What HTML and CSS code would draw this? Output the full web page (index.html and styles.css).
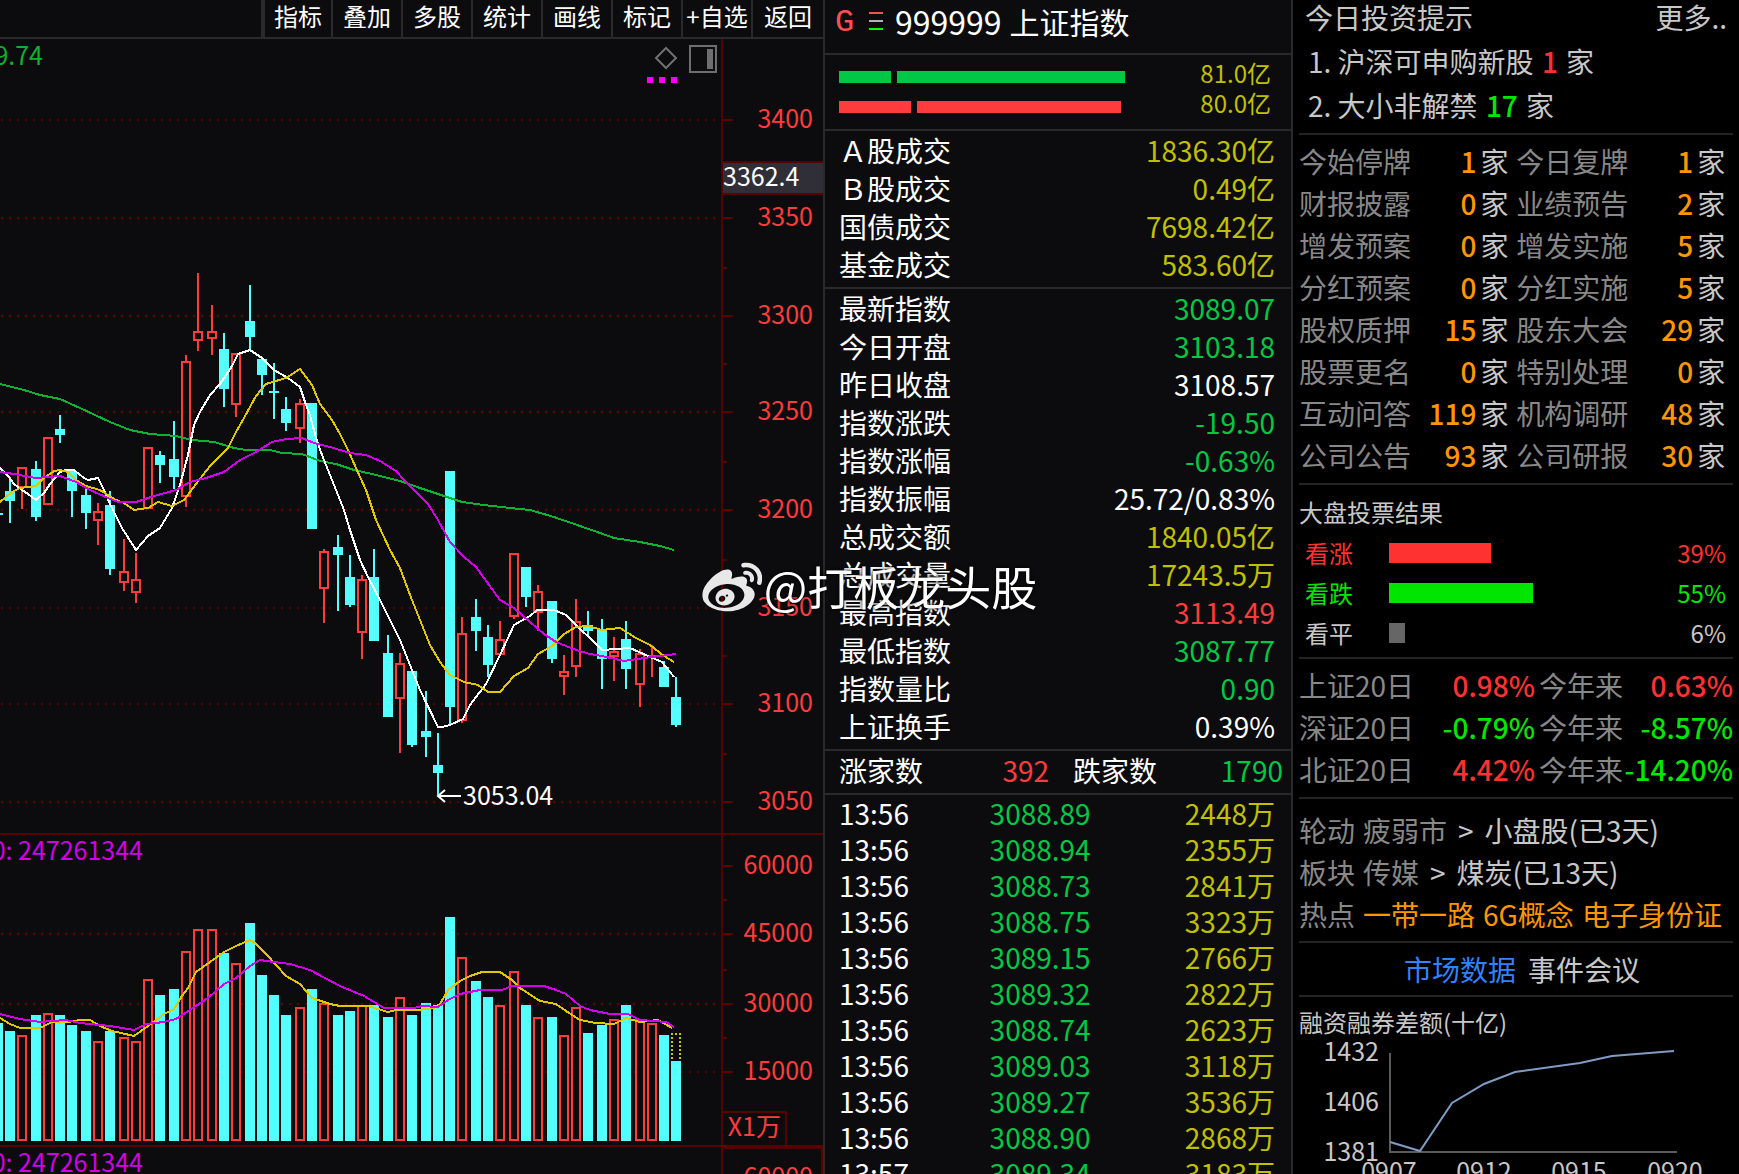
FILE: index.html
```html
<!DOCTYPE html>
<html lang="zh-CN">
<head>
  <meta charset="UTF-8" />
  <meta name="viewport" content="width=device-width, initial-scale=1.0"/>
  <title>999999 上证指数</title>
  <link rel="stylesheet" href="styles.css">
</head>
<body>
  <div class="layout">
    <main class="chart-panel">
      <div class="toolbar">
        <button>指标</button>
        <button>叠加</button>
        <button>多股</button>
        <button>统计</button>
        <button>画线</button>
        <button>标记</button>
        <button>+自选</button>
        <button>返回</button>
      </div>
      <svg id="kline" class="kline" viewBox="0 39 823 1135"></svg>
    </main>

    <section class="quote-panel">
      <h1 class="quote-head">
        <span class="flag">G</span>
        <svg class="menu-icon" width="14" height="18" viewBox="0 0 14 18">
          <rect y="0" width="14" height="2" fill="#ff5050"/>
          <rect y="8" width="14" height="2" fill="#b4b4b4"/>
          <rect y="16" width="14" height="2" fill="#00ff00"/>
        </svg>
        <span class="code">999999</span>
        <span>上证指数</span>
      </h1>

      <div class="block flow">
        <div class="flow-row down-bar"><i style="width:52px"></i><i style="width:228px"></i><span>81.0亿</span></div>
        <div class="flow-row up-bar"><i style="width:72px"></i><i style="width:204px"></i><span>80.0亿</span></div>
      </div>

      <table class="block quotes">
        <tr><th>Ａ股成交</th><td class="amount">1836.30亿</td></tr>
        <tr><th>Ｂ股成交</th><td class="amount">0.49亿</td></tr>
        <tr><th>国债成交</th><td class="amount">7698.42亿</td></tr>
        <tr><th>基金成交</th><td class="amount">583.60亿</td></tr>
      </table>

      <table class="block quotes">
        <tr><th>最新指数</th><td class="down">3089.07</td></tr>
        <tr><th>今日开盘</th><td class="down">3103.18</td></tr>
        <tr><th>昨日收盘</th><td>3108.57</td></tr>
        <tr><th>指数涨跌</th><td class="down">-19.50</td></tr>
        <tr><th>指数涨幅</th><td class="down">-0.63%</td></tr>
        <tr><th>指数振幅</th><td>25.72/0.83%</td></tr>
        <tr><th>总成交额</th><td class="amount">1840.05亿</td></tr>
        <tr><th>总成交量</th><td class="amount">17243.5万</td></tr>
        <tr><th>最高指数</th><td class="up">3113.49</td></tr>
        <tr><th>最低指数</th><td class="down">3087.77</td></tr>
        <tr><th>指数量比</th><td class="down">0.90</td></tr>
        <tr><th>上证换手</th><td>0.39%</td></tr>
      </table>

      <div class="block breadth">
        <span>涨家数</span><span class="up">392</span>
        <span>跌家数</span><span class="down">1790</span>
      </div>

      <table class="ticks">
        <tr><td>13:56</td><td class="down">3088.89</td><td class="amount">2448万</td></tr>
        <tr><td>13:56</td><td class="down">3088.94</td><td class="amount">2355万</td></tr>
        <tr><td>13:56</td><td class="down">3088.73</td><td class="amount">2841万</td></tr>
        <tr><td>13:56</td><td class="down">3088.75</td><td class="amount">3323万</td></tr>
        <tr><td>13:56</td><td class="down">3089.15</td><td class="amount">2766万</td></tr>
        <tr><td>13:56</td><td class="down">3089.32</td><td class="amount">2822万</td></tr>
        <tr><td>13:56</td><td class="down">3088.74</td><td class="amount">2623万</td></tr>
        <tr><td>13:56</td><td class="down">3089.03</td><td class="amount">3118万</td></tr>
        <tr><td>13:56</td><td class="down">3089.27</td><td class="amount">3536万</td></tr>
        <tr><td>13:56</td><td class="down">3088.90</td><td class="amount">2868万</td></tr>
        <tr><td>13:57</td><td class="down">3089.34</td><td class="amount">3183万</td></tr>
      </table>
    </section>

    <aside class="info-panel">
      <div class="card tips">
        <div class="tips-head"><span>今日投资提示</span><a href="#">更多..</a></div>
        <p>1. 沪深可申购新股 <b class="hot">1</b> 家</p>
        <p>2. 大小非解禁 <b class="cool">17</b> 家</p>
      </div>

      <div class="card">
        <table class="events">
          <tr><th>今始停牌</th><td>1</td><td>家</td><th>今日复牌</th><td>1</td><td>家</td></tr>
          <tr><th>财报披露</th><td>0</td><td>家</td><th>业绩预告</th><td>2</td><td>家</td></tr>
          <tr><th>增发预案</th><td>0</td><td>家</td><th>增发实施</th><td>5</td><td>家</td></tr>
          <tr><th>分红预案</th><td>0</td><td>家</td><th>分红实施</th><td>5</td><td>家</td></tr>
          <tr><th>股权质押</th><td>15</td><td>家</td><th>股东大会</th><td>29</td><td>家</td></tr>
          <tr><th>股票更名</th><td>0</td><td>家</td><th>特别处理</th><td>0</td><td>家</td></tr>
          <tr><th>互动问答</th><td>119</td><td>家</td><th>机构调研</th><td>48</td><td>家</td></tr>
          <tr><th>公司公告</th><td>93</td><td>家</td><th>公司研报</th><td>30</td><td>家</td></tr>
        </table>
      </div>

      <div class="card vote">
        <h2>大盘投票结果</h2>
        <div class="vote-row hot"><span>看涨</span><div class="track"><i style="width:39%"></i></div><span>39%</span></div>
        <div class="vote-row cool"><span>看跌</span><div class="track"><i style="width:55%"></i></div><span>55%</span></div>
        <div class="vote-row flat"><span>看平</span><div class="track"><i style="width:6%"></i></div><span>6%</span></div>
      </div>

      <div class="card">
        <table class="returns">
          <tr><th>上证20日</th><td class="hot">0.98%</td><th>今年来</th><td class="hot">0.63%</td></tr>
          <tr><th>深证20日</th><td class="cool">-0.79%</td><th>今年来</th><td class="cool">-8.57%</td></tr>
          <tr><th>北证20日</th><td class="hot">4.42%</td><th>今年来</th><td class="cool">-14.20%</td></tr>
        </table>
      </div>

      <div class="card themes">
        <div class="theme"><em>轮动</em><em>疲弱市</em><span class="arrow">&gt;</span><span>小盘股(已3天)</span></div>
        <div class="theme"><em>板块</em><em>传媒</em><span class="arrow">&gt;</span><span>煤炭(已13天)</span></div>
        <div class="theme"><em>热点</em><a href="#">一带一路</a><a href="#">6G概念</a><a href="#">电子身份证</a></div>
      </div>

      <div class="card tabs">
        <button class="active">市场数据</button>
        <button>事件会议</button>
      </div>

      <div class="margin-data">
        <h2>融资融券差额(十亿)</h2>
        <svg class="margin-chart" viewBox="0 0 434 142">
          <path d="M91 8V107H378" fill="none" stroke="#5a5a5a" stroke-width="2"/>
          <polyline points="91,97 121,106 153,58 185,39 216,27 281,18 313,11 375,6" fill="none" stroke="#7f9cc4" stroke-width="2"/>
          <g text-anchor="end">
            <text x="80" y="16">1432</text>
            <text x="80" y="66">1406</text>
            <text x="80" y="116">1381</text>
          </g>
          <g text-anchor="middle">
            <text x="90" y="136">0907</text>
            <text x="185" y="136">0912</text>
            <text x="280" y="136">0915</text>
            <text x="376" y="136">0920</text>
          </g>
        </svg>
      </div>
    </aside>
  </div>

  <div class="watermark">
    <svg width="60" height="50" viewBox="0 2 24 20" fill="#e8e8e8">
      <path d="M10.098 20.323c-3.977.391-7.414-1.406-7.672-4.02-.259-2.609 2.759-5.047 6.74-5.441 3.979-.394 7.413 1.404 7.671 4.018.259 2.6-2.759 5.049-6.737 5.439l-.002.004zM9.05 17.219c-.384.616-1.208.884-1.829.602-.612-.279-.793-.991-.406-1.593.379-.595 1.176-.861 1.793-.601.622.263.82.972.442 1.592zm1.27-1.627c-.141.237-.449.353-.689.253-.236-.09-.313-.361-.177-.586.138-.227.436-.346.672-.24.239.09.315.36.18.601l.014-.028zm.176-2.719c-1.893-.493-4.033.45-4.857 2.118-.836 1.704-.026 3.591 1.886 4.21 1.983.64 4.318-.341 5.132-2.179.8-1.793-.201-3.642-2.161-4.149zm7.563-1.224c-.346-.105-.57-.18-.405-.615.375-.977.42-1.804 0-2.404-.781-1.112-2.915-1.053-5.364-.03 0 0-.766.331-.571-.271.376-1.217.315-2.224-.27-2.809-1.338-1.337-4.869.045-7.888 3.08C1.309 10.87 0 13.273 0 15.348c0 3.981 5.099 6.395 10.086 6.395 6.536 0 10.888-3.801 10.888-6.82 0-1.822-1.547-2.854-2.915-3.284v.01zm1.908-5.092c-.766-.856-1.908-1.187-2.96-.962-.436.09-.706.511-.616.932.09.42.511.691.932.602.511-.105 1.067.044 1.442.465.376.421.466.977.316 1.473-.136.406.089.856.51.992.405.119.857-.105.992-.512.33-1.021.12-2.178-.646-3.035l.03.045zm2.418-2.195c-1.576-1.757-3.905-2.419-6.054-1.968-.496.104-.812.587-.706 1.081.104.496.586.813 1.082.707 1.532-.331 3.185.15 4.296 1.383 1.112 1.246 1.429 2.943.947 4.416-.165.48.106 1.007.586 1.157.479.165.991-.104 1.157-.586.675-2.088.241-4.478-1.338-6.235l.03.045z"/>
    </svg>
    <span>@打板龙头股</span>
  </div>

  <script src="chart.js"></script>
</body>
</html>
```

FILE: styles.css
```css
* {
  box-sizing: border-box;
}
body {
  margin: 0;
  height: 100vh;
  overflow: hidden;
  background: #0c0c0e;
  color: #fff;
  font-family: "Noto Sans CJK SC", sans-serif;
  font-size: 28px;
}
h1, h2, p {
  margin: 0;
  font-weight: normal;
}
button {
  padding: 0;
  border: none;
  background: none;
  color: inherit;
  font: inherit;
  cursor: pointer;
}
a {
  color: inherit;
  text-decoration: none;
}
em, b, i {
  font-style: normal;
}
table {
  width: 100%;
  border-spacing: 0;
}
th, td {
  padding: 0;
  font-weight: normal;
  text-align: left;
  white-space: nowrap;
}
.layout {
  display: grid;
  grid-template-columns: minmax(0, 1fr) 470px 446px;
  height: 100vh;
}
.up { color: #ff3c3c; }
.down { color: #00c846; }
.amount { color: #c0c000; }
.hot { color: #ff3232; }
.cool { color: #00e600; }

/* k-line */
.chart-panel {
  overflow: hidden;
}
.toolbar {
  display: flex;
  justify-content: flex-end;
  height: 39px;
  border-bottom: 2px solid #2a2a2c;
  font-size: 24px;
}
.toolbar button {
  width: 70px;
  padding-bottom: 5px;
  border-right: 2px solid #2a2a2c;
  line-height: 30px;
  white-space: nowrap;
  overflow: hidden;
}
.toolbar button:first-child {
  width: 72px;
  border-left: 4px solid #2a2a2c;
}
.toolbar button:last-child {
  border-right: none;
}
.kline {
  display: block;
  width: 100%;
  font-size: 25px;
}
.kline .candle, .kline .frame, .kline .grid, .kline .ma {
  shape-rendering: crispEdges;
}
.kline .ma {
  fill: none;
  stroke-width: 2;
}
.kline .frame {
  fill: none;
  stroke: #5a0000;
  stroke-width: 2;
}
.kline .grid {
  stroke: #5a0000;
  stroke-width: 2;
  stroke-dasharray: 2 6;
}
.kline .axis-label {
  fill: #ff3c3c;
  text-anchor: end;
}

/* quote */
.quote-panel {
  border-left: 2px solid #2a2a2c;
  border-right: 2px solid #2a2a2c;
  overflow: hidden;
}
.quote-head {
  display: flex;
  align-items: center;
  height: 55px;
  padding: 0 0 11px 10px;
  border-bottom: 2px solid #2a2a2c;
  font-size: 30px;
  line-height: 40px;
}
.flag {
  width: 34px;
  padding-top: 4px;
  color: #ff5050;
  font-family: "Liberation Mono", monospace;
  font-size: 32px;
}
.menu-icon {
  margin-right: 12px;
}
.code {
  margin-right: 8px;
  font-size: 32px;
}
.block {
  border-bottom: 2px solid #2a2a2c;
  padding: 0 16px 4px 14px;
}
.flow {
  height: 76px;
  padding-top: 3px;
}
.flow-row {
  display: flex;
  align-items: center;
  gap: 6px;
  height: 30px;
  font-size: 24px;
  line-height: 30px;
}
.flow-row i {
  height: 12px;
  margin-top: 8px;
}
.flow-row span {
  margin-left: auto;
  padding-right: 4px;
  color: #c0c000;
}
.down-bar i { background: #00c846; }
.up-bar i { background: #ff3c3c; }
.quotes tr, .breadth {
  line-height: 38px;
}
.quotes td {
  text-align: right;
}
.breadth {
  display: grid;
  grid-template-columns: 84px 126px 108px 1fr;
  padding-right: 8px;
}
.breadth span:nth-child(3) {
  padding-left: 24px;
}
.breadth .up, .breadth .down {
  text-align: right;
}
.ticks {
  padding: 0 16px 0 14px;
  line-height: 36px;
}
.ticks td:nth-child(2) {
  text-align: center;
}
.ticks td:nth-child(3) {
  text-align: right;
}

/* info */
.info-panel {
  padding: 0 6px;
  background: #000;
  color: #c8c8c8;
  overflow: hidden;
}
.info-panel h2 {
  font-size: 24px;
}
.info-panel th, .info-panel em {
  color: #888;
}
.card {
  padding: 5px 0 7px;
  border-bottom: 2px solid #242424;
}
.tips {
  padding: 0 6px 6px;
}
.tips-head {
  display: flex;
  justify-content: space-between;
  padding-bottom: 5px;
  line-height: 34px;
}
.tips p {
  padding-left: 3px;
  line-height: 44px;
}
.tips b {
  margin: 0 2px;
  font-weight: 500;
}
.events, .returns {
  line-height: 42px;
}
.events th {
  width: 112px;
}
.events td {
  width: 66px;
  color: #ff9600;
  font-weight: 500;
  text-align: right;
}
.events td + td {
  width: 40px;
  padding-left: 4px;
  color: #c8c8c8;
  font-weight: normal;
  text-align: left;
}
.vote {
  padding-bottom: 4px;
}
.vote h2 {
  line-height: 43px;
}
.vote-row {
  display: grid;
  grid-template-columns: 84px 262px 1fr;
  align-items: center;
  padding: 0 7px 0 6px;
  font-size: 24px;
  line-height: 40px;
}
.vote-row > span:last-child {
  text-align: right;
}
.track {
  height: 20px;
}
.track i {
  display: block;
  height: 100%;
}
.hot .track i { background: #ff3232; }
.cool .track i { background: #00e600; }
.flat .track i { background: #666; }
.returns td {
  text-align: right;
  font-weight: 500;
}
.returns th:nth-child(3) {
  width: 88px;
  padding-left: 4px;
}
.returns td:last-child {
  width: 110px;
}
.themes {
  padding: 10px 0 6px;
}
.theme {
  display: flex;
  gap: 8px;
  line-height: 42px;
}
.theme a {
  color: #ff9600;
}
.arrow {
  margin: 0 3px;
}
.tabs {
  display: flex;
  justify-content: center;
  gap: 12px;
  height: 54px;
  padding: 0 0 0 12px;
}
.tabs .active {
  color: #3282ff;
}
.margin-data h2 {
  padding-top: 2px;
  line-height: 46px;
}
.margin-chart {
  display: block;
  width: 100%;
  overflow: visible;
  fill: #c8c8c8;
  font-size: 25px;
}

.watermark {
  position: fixed;
  top: 50%;
  left: 50%;
  transform: translate(-50%, -50%);
  display: flex;
  align-items: center;
  gap: 2px;
  font-size: 46px;
  line-height: 46px;
  white-space: nowrap;
  text-shadow: 0 0 4px #000;
  pointer-events: none;
}
.watermark span {
  padding-bottom: 4px;
}
```

FILE: chart.js
```js
const RED = "#ff3c3c", CYAN = "#54ffff", BG = "#0c0c0e";

// x, high, bodyTop, bodyBottom, low, volumeTop, rising
const bars = [
  [-7, 513, 513, 515, 515, 1023, 0], [5, 477, 491, 501, 523, 1031, 0],
  [17, 467, 467, 488, 509, 1035, 1], [31, 461, 469, 517, 521, 1015, 0],
  [43, 437, 437, 505, 505, 1013, 1], [55, 415, 429, 435, 443, 1015, 0],
  [67, 471, 471, 491, 517, 1025, 0], [81, 489, 495, 513, 529, 1031, 0],
  [93, 503, 511, 521, 545, 1041, 1], [105, 491, 505, 569, 575, 1031, 0],
  [119, 539, 571, 583, 591, 1037, 1], [131, 553, 579, 593, 603, 1041, 1],
  [143, 447, 447, 509, 509, 979, 1], [155, 451, 455, 465, 483, 995, 0],
  [169, 421, 459, 477, 489, 989, 0], [181, 355, 361, 497, 507, 951, 1],
  [193, 273, 331, 341, 351, 929, 1], [207, 305, 331, 339, 355, 929, 1],
  [219, 333, 349, 389, 407, 953, 0], [231, 353, 353, 405, 417, 963, 1],
  [245, 285, 321, 337, 350, 923, 0], [257, 359, 359, 375, 395, 975, 0],
  [269, 363, 391, 393, 419, 995, 0], [281, 397, 409, 423, 431, 1015, 0],
  [295, 399, 403, 429, 443, 1007, 1], [307, 403, 403, 529, 529, 989, 0],
  [319, 549, 551, 589, 623, 1003, 1], [333, 535, 547, 555, 611, 1015, 0],
  [345, 555, 577, 605, 607, 1011, 0], [357, 575, 579, 633, 659, 1005, 1],
  [369, 549, 577, 641, 641, 1005, 0], [383, 635, 653, 717, 717, 1017, 0],
  [395, 653, 663, 699, 753, 997, 1], [407, 671, 671, 745, 747, 1015, 0],
  [421, 691, 731, 737, 757, 1003, 0], [433, 733, 765, 773, 795, 1005, 0],
  [445, 471, 471, 707, 725, 917, 0], [457, 617, 633, 721, 723, 957, 1],
  [471, 599, 617, 631, 651, 981, 0], [483, 625, 637, 665, 677, 997, 0],
  [495, 621, 639, 655, 655, 1005, 1], [509, 553, 553, 617, 619, 971, 1],
  [521, 567, 567, 597, 607, 1005, 0], [533, 585, 591, 613, 631, 1017, 1],
  [547, 601, 601, 659, 663, 1017, 0], [559, 655, 671, 677, 695, 1035, 1],
  [571, 599, 621, 667, 677, 1007, 1], [583, 611, 625, 631, 635, 1033, 0],
  [597, 619, 629, 659, 689, 1025, 0], [609, 637, 651, 657, 681, 1019, 1],
  [621, 621, 639, 669, 689, 1005, 0], [635, 649, 653, 685, 707, 1019, 1],
  [647, 645, 655, 657, 677, 1023, 1], [659, 661, 667, 687, 687, 1035, 0],
  [671, 677, 697, 725, 727, 1061, 0]
];

const lines = [
  ["#10b030", "0,384 24,390 40,395 60,399 80,408 110,422 130,430 150,434 176,436 192,440 214,442 234,448 246,450 270,450 282,453 302,454 320,461 336,464 354,470 372,474 400,481 420,488 450,498 462,502 484,505 510,508 530,510 554,517 580,526 600,533 614,538 640,542 660,546 674,550"],
  ["#ffffff", "0,468 8,476 14,484 22,490 28,494 36,500 44,493 50,484 60,472 66,470 74,470 84,478 88,480 98,478 104,490 110,504 122,528 136,550 148,536 160,528 172,508 180,485 188,455 194,425 200,412 210,395 220,384 232,366 238,354 250,350 262,358 274,370 288,378 300,387 306,405 310,415 316,438 322,455 330,475 338,495 344,510 350,530 360,560 368,577 380,600 400,640 412,670 420,690 438,727 442,727 450,725 463,719 470,705 486,684 500,655 514,625 530,616 537,610 554,610 566,615 580,629 590,638 602,650 630,648 648,656 662,662 674,677"],
  ["#e0c800", "0,502 12,492 20,488 36,486 44,478 54,471 60,470 68,472 76,480 86,486 100,490 114,499 124,503 134,510 148,508 158,502 172,506 184,500 196,484 210,466 228,448 236,432 244,418 256,396 266,384 286,378 300,369 312,385 320,404 332,420 340,434 348,450 356,468 366,490 376,520 390,550 400,568 412,600 420,620 430,645 440,662 450,675 464,682 478,685 488,692 500,692 514,676 528,668 538,654 552,646 564,634 576,627 588,626 602,630 620,628 636,638 650,645 664,656 674,662"],
  ["#d200e6", "0,472 14,474 36,478 60,476 76,482 90,490 108,498 118,502 136,502 154,496 176,490 190,482 206,478 224,472 240,460 256,452 272,442 286,439 302,438 314,443 330,447 350,453 366,455 380,461 396,471 404,480 418,494 428,504 438,520 450,542 464,557 476,567 500,600 514,608 530,622 544,634 556,642 576,650 590,654 602,656 624,661 644,658 660,656 676,654"],
  ["#e0c800", "0,1018 10,1024 20,1028 40,1028 52,1022 68,1022 80,1020 90,1020 100,1026 112,1031 134,1036 148,1026 164,1014 174,1009 182,996 188,988 196,972 210,962 224,952 236,946 250,940 256,944 268,956 286,976 300,984 312,998 330,1004 340,1006 368,1006 388,1012 396,1010 418,1010 434,1008 440,1004 448,990 460,981 470,976 482,972 500,972 512,980 520,988 540,1001 556,1004 566,1011 580,1020 596,1023 614,1024 626,1018 640,1022 658,1020 672,1028"],
  ["#d200e6", "0,1014 20,1019 40,1022 66,1020 80,1023 110,1026 134,1030 146,1024 164,1022 176,1019 196,1006 208,998 224,984 236,978 250,966 260,960 274,962 290,964 310,970 340,986 364,996 384,1008 414,1008 422,1006 438,1007 448,1000 460,994 480,990 502,990 512,986 544,986 556,990 566,994 580,1006 590,1010 610,1014 628,1014 640,1020 666,1022 674,1027"]
];

const axis = [
  [120, "3400"], [218, "3350"], [316, "3300"], [412, "3250"],
  [510, "3200"], [608, "3150"], [704, "3100"], [802, "3050"],
  [866, "60000"], [934, "45000"], [1004, "30000"], [1072, "15000"]
];
const minorTicks = [268, 364, 462, 560, 656, 754, 900, 970, 1038];

function body(x, top, bottom, rising) {
  if (!rising) {
    return `<rect class="candle" x="${x}" y="${top}" width="10" height="${bottom - top}" fill="${CYAN}"/>`;
  }
  const h = Math.max(bottom - top - 2, 0.1);
  return `<rect class="candle" x="${x + 1}" y="${top + 1}" width="8" height="${h}" fill="${BG}" stroke="${RED}" stroke-width="2"/>`;
}

function renderChart() {
  let out = "";
  axis.forEach(([y, label]) => {
    if (label !== "60000") {
      out += `<line class="grid" x1="1" x2="717" y1="${y}" y2="${y}"/>`;
    }
    out += `<line class="frame" x1="722" x2="733" y1="${y}" y2="${y}"/>`;
    out += `<text class="axis-label" x="813" y="${y + 8}">${label}</text>`;
  });
  minorTicks.forEach(y => {
    out += `<line class="frame" x1="722" x2="727" y1="${y}" y2="${y}"/>`;
  });

  // pane borders
  out += `<path class="frame" d="M722 39V1174M0 834H823M0 1146H823M722 1112H786V1146M724 1148H822V1174"/>`;

  bars.forEach(([x, high, top, bottom, low, vol, rising]) => {
    out += `<rect class="candle" x="${x + 4}" y="${high}" width="2" height="${low - high}" fill="${rising ? RED : CYAN}"/>`;
    out += body(x, top, bottom, rising);
    out += body(x, vol, 1141, rising);
  });
  // projected volume of the current day
  out += `<path class="candle" d="M672 1059V1033M671 1034H681M680 1033V1059" fill="none" stroke="#c8c800" stroke-width="2" stroke-dasharray="2 2"/>`;

  lines.forEach(([color, points]) => {
    out += `<polyline class="ma" stroke="${color}" points="${points}"/>`;
  });

  // cursor price
  out += `<rect x="723" y="161" width="100" height="34" fill="#302f38"/>`;
  out += `<path class="frame" d="M722 162H823M722 194H823"/>`;
  out += `<text x="723" y="186" fill="#fff">3362.4</text>`;

  // lowest price mark
  out += `<path d="M438 796H461M445 790L438 796L445 802" fill="none" stroke="#fff" stroke-width="2"/>`;
  out += `<text x="463" y="805" fill="#fff">3053.04</text>`;

  out += `<path d="M666 48L676 58L666 68L656 58Z" fill="none" stroke="#707070" stroke-width="2"/>`;
  out += `<rect class="candle" x="690" y="46" width="26" height="26" fill="none" stroke="#6e6e6e" stroke-width="2"/>`;
  out += `<rect x="707" y="49" width="6" height="20" fill="#6e6e6e"/>`;
  out += `<path d="M647 77h6v6h-6zM659 77h6v6h-6zM671 77h6v6h-6z" fill="#ff00ff"/>`;

  out += `<text x="43" y="65" text-anchor="end" fill="#10b030">3089.74</text>`;
  out += `<text x="143" y="860" text-anchor="end" fill="#d200e6">10: 247261344</text>`;
  out += `<text x="143" y="1172" text-anchor="end" fill="#d200e6">10: 247261344</text>`;
  out += `<text class="axis-label" x="781" y="1136">X1万</text>`;
  out += `<text class="axis-label" x="813" y="1186">60000</text>`;
  document.getElementById("kline").innerHTML = out;
}

renderChart();
```
